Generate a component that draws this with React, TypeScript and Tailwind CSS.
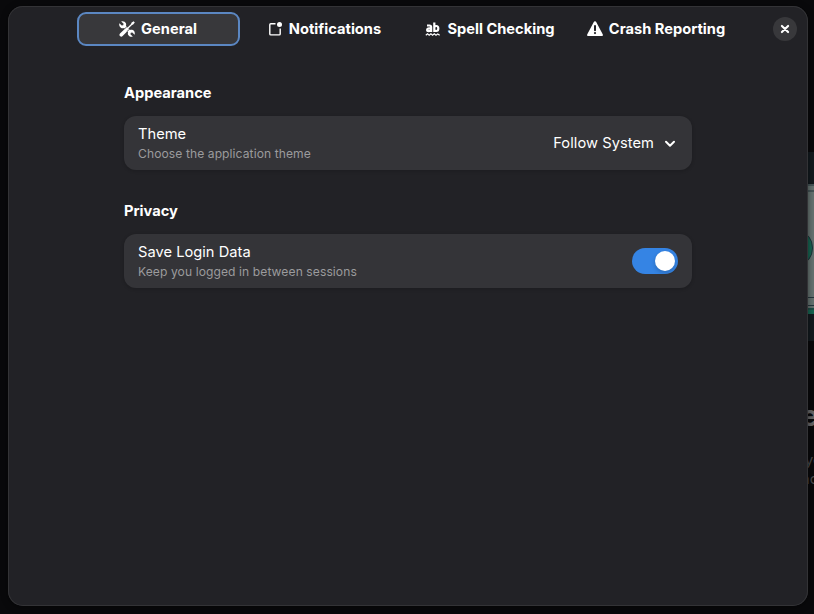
import type { ReactNode } from "react";

function ToolsIcon() {
  return (
    <svg width="16" height="16" viewBox="0 0 16 16" className="shrink-0">
      <path d="M2.2 .4 4.6 2.7 4.2 4.2 2.7 4.6 .4 2.2C-.2 4.2.6 6.2 2.2 6.9 3.2 7.3 4.2 7.2 5 6.9L9.1 11C8.8 11.8 8.7 12.9 9.1 13.8 9.9 15.5 11.8 16.2 13.8 15.6L11.4 13.3 11.8 11.8 13.3 11.4 15.6 13.8C16.2 11.8 15.4 9.8 13.8 9.1 12.8 8.7 11.8 8.8 11 9.1L6.9 5C7.2 4.2 7.3 3.1 6.9 2.2 6.1.5 4.2-.2 2.2.4Z" fill="#fff" />
      <path d="M6.3 7.6 8.6 9.9 3.6 15.1C2.9 15.8 1.7 15.8 1 15.1.2 14.4.2 13.2 1 12.4Z" fill="#fff" />
      <path d="M12.4 1.8 14.6.2 15.8 1.4 14.2 3.6 13 3.9 8.4 8.5 7.5 7.6 12.1 3Z" fill="#fff" />
      <path d="M5.6 7.9 7.8 5.7M8.2 10.4 10.4 8.2" stroke="#363638" strokeWidth=".9" />
    </svg>
  );
}

function NotificationIcon() {
  return (
    <svg width="16" height="16" viewBox="0 0 16 16" className="shrink-0">
      <path d="M8.5 2.8H3.8Q2.8 2.8 2.8 3.8V12.9Q2.8 13.9 3.8 13.9H12.2Q13.2 13.9 13.2 12.9V7.5" fill="none" stroke="#fff" strokeWidth="1.4" />
      <circle cx="12.5" cy="3.6" r="2.5" fill="#fff" />
    </svg>
  );
}

function SpellIcon() {
  return (
    <svg width="16" height="16" viewBox="0 0 16 16" className="shrink-0" fill="none" stroke="#fff">
      <path d="M2 4.5H4.4Q6.2 4.5 6.2 6.3V11M6.2 7.4H4.1Q2.1 7.4 2.1 8.9 2.1 10.1 3.8 10.1 5.2 10.1 6.2 9.1" strokeWidth="2.1" />
      <path d="M9.3 1.5V11M9.3 5.9Q10 5 11.3 5 13.3 5 13.3 7.5 13.3 10 11.3 10 10 10 9.3 9.1" strokeWidth="2.2" />
      <path d="M.8 14.3 2.5 12.9 4.2 14.3 5.9 12.9 7.6 14.3 9.3 12.9 11 14.3 12.7 12.9 14.7 14.3" strokeWidth="1.2" />
    </svg>
  );
}

function WarningIcon() {
  return (
    <svg width="16" height="16" viewBox="0 0 16 16" className="shrink-0">
      <path d="M8 .2C8.6.2 9 .5 9.2.9L15.7 13.2C16.3 14.3 15.6 15 14.8 15H1.2C.4 15-.3 14.3.3 13.2L6.8.9C7 .5 7.4.2 8 .2Z" fill="#fff" />
      <path d="M8 5V9.2" stroke="#222226" strokeWidth="2" strokeLinecap="round" />
      <circle cx="8" cy="12.1" r="1.1" fill="#222226" />
    </svg>
  );
}

function Tab({ icon, label, active }: { icon: ReactNode; label: string; active?: boolean }) {
  return (
    <button
      className={`flex h-[34px] w-[163px] items-center justify-center gap-1.5 rounded-[9px] pr-px font-bold whitespace-nowrap ${
        active ? "border-2 border-[#5b87c2] bg-[#38383b]" : ""
      }`}
    >
      {icon}
      <span>{label}</span>
    </button>
  );
}

function Row({ title, subtitle, children }: { title: string; subtitle: string; children: ReactNode }) {
  return (
    <div className="mt-[13px] flex h-[54px] items-center justify-between rounded-xl bg-[#343438] px-3.5 shadow-[0_1px_3px_1px_rgba(0,0,0,0.12)]">
      <div className="pt-0.5">
        <div className="h-5 leading-5 tracking-[0.02px]">{title}</div>
        <div className="h-5 text-[12.1px] leading-5 tracking-[0.08px] text-[#9b9b9d]">{subtitle}</div>
      </div>
      {children}
    </div>
  );
}

function Backdrop() {
  return (
    <div className="absolute inset-y-0 right-0 w-[30px] overflow-hidden">
      <svg className="absolute top-[140px] left-0" width="30" height="210" viewBox="784 140 30 210">
        <rect x="784" y="152" width="30" height="189" fill="#131a1e" />
        <rect x="784" y="184" width="30" height="124" fill="#657270" />
        <path d="M784 185H814M784 191H814M784 297.5H814M784 305.5H814" stroke="#26363d" strokeWidth="1.2" />
        <rect x="784" y="308" width="30" height="6" fill="#176451" />
        <path d="M784 309H814" stroke="#26363d" />
        <ellipse cx="800" cy="248" rx="12.5" ry="16" fill="#176451" stroke="#1c3138" />
      </svg>
      <div className="absolute top-[398px] left-[17px] text-[29px] leading-9 font-bold text-[#656566]">e</div>
      <div className="absolute top-[450px] left-[21px] text-[14.67px] leading-5 text-[#4a4a4c]">yo</div>
      <div className="absolute top-[469px] left-[17px] text-[14.67px] leading-5 text-[#4a4a4c]">no</div>
    </div>
  );
}

export default function App() {
  return (
    <div className="relative h-[614px] w-[814px] overflow-hidden bg-[#09090b] px-2 pt-1.5 font-['Inter',sans-serif] text-[14.67px] text-white">
      <Backdrop />
      <main className="relative h-[600px] w-[800px] rounded-[15px] bg-[#222226] shadow-[inset_0_0_0_1px_#333336,0_1px_6px_rgba(0,0,0,0.5)]">
        <header className="flex h-[46px] items-center justify-between pr-[11px] pl-[69px]">
          <nav className="flex gap-[3px]">
            <Tab icon={<ToolsIcon />} label="General" active />
            <Tab icon={<NotificationIcon />} label="Notifications" />
            <Tab icon={<SpellIcon />} label="Spell Checking" />
            <Tab icon={<WarningIcon />} label="Crash Reporting" />
          </nav>
          <button className="flex size-6 items-center justify-center rounded-full bg-[#38383b]" aria-label="Close">
            <svg width="16" height="16" viewBox="0 0 16 16">
              <path d="M4.9 4.9 11.1 11.1M11.1 4.9 4.9 11.1" stroke="#fff" strokeWidth="2.1" strokeLinecap="round" />
            </svg>
          </button>
        </header>
        <div className="mx-[116px] pt-[31px]">
          <section>
            <h2 className="h-5 leading-5 font-bold">Appearance</h2>
            <Row title="Theme" subtitle="Choose the application theme">
              <div className="flex items-center gap-2">
                <span className="tracking-[0.06px]">Follow System</span>
                <svg width="16" height="16" viewBox="0 0 16 16">
                  <path d="M4 6.7 8 10.7 12 6.7" fill="none" stroke="#fff" strokeWidth="2" strokeLinecap="round" strokeLinejoin="round" />
                </svg>
              </div>
            </Row>
          </section>
          <section className="mt-[31px]">
            <h2 className="h-5 leading-5 font-bold">Privacy</h2>
            <Row title="Save Login Data" subtitle="Keep you logged in between sessions">
              <div className="flex h-[26px] w-[46px] items-center justify-end rounded-full bg-[#3584e4] p-[3px]">
                <div className="size-5 rounded-full bg-white shadow-[0_2px_4px_rgba(0,0,0,0.2)]" />
              </div>
            </Row>
          </section>
        </div>
      </main>
    </div>
  );
}
